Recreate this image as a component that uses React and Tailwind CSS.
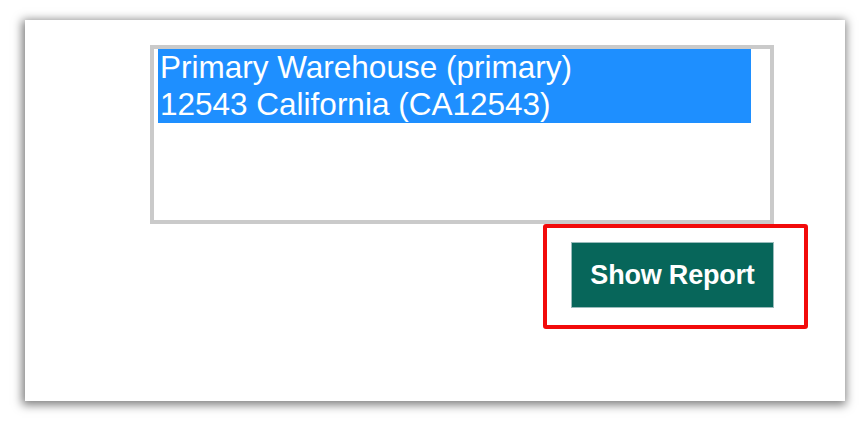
export default function App() {
  return (
    <div className="w-[868px] h-[422px] bg-white pt-[20px] pl-[25px] font-['Liberation_Sans',Arial,sans-serif]">
      <div className="w-[820px] h-[381px] bg-white shadow-[-1px_2px_9px_2px_rgba(0,0,0,0.5)] pt-[25px] pl-[125px] flex flex-col">
        {/* Warehouse list */}
        <div className="w-[624px] h-[179px] border-[4px] border-[#cacaca] pl-[4px] bg-white">
          <div className="w-[593px] bg-[#1e8fff] text-white text-[31.5px] leading-[37px] pl-[2px]">
            <div>Primary Warehouse (primary)</div>
            <div>12543 California (CA12543)</div>
          </div>
        </div>

        {/* Action */}
        <div className="ml-[393px] w-[265px] h-[105px] border-[4px] border-[#f20a0a] rounded-[3px] pt-[14px] pl-[24px]">
          <button className="w-[203px] h-[66px] bg-[#07665a] border border-[#9bb] text-white font-bold text-[27px] tracking-[-0.2px]">
            Show Report
          </button>
        </div>
      </div>
    </div>
  );
}
